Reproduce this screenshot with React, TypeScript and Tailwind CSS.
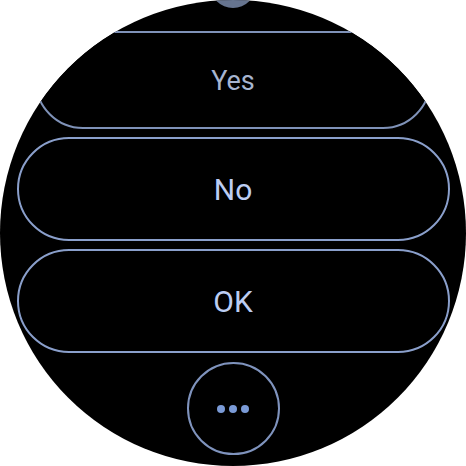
import React from "react";

const labelFont = { fontFamily: "Roboto, 'Noto Sans', sans-serif" };

const ChipButton: React.FC<{ label: string; small?: boolean }> = ({ label, small }) => {
  if (small) {
    return (
      <button className="flex w-[396px] h-[98px] shrink-0 items-center justify-center rounded-[48px] border-2 border-[#7f92b8] bg-black">
        <span className="mt-[2px] text-[27px] leading-none text-[#a7b5d0]" style={labelFont}>
          {label}
        </span>
      </button>
    );
  }
  return (
    <button className="flex w-[433px] h-[104px] shrink-0 items-center justify-center rounded-[52px] border-2 border-[#8a9fcb] bg-black">
      <span className="mt-[2px] text-[30px] leading-none text-[#bccdf3]" style={labelFont}>
        {label}
      </span>
    </button>
  );
};

export default function App() {
  return (
    <div className="w-[466px] h-[466px] bg-white">
      <div className="relative w-[466px] h-[466px] overflow-hidden rounded-full bg-black">
        <div className="flex flex-col items-center pt-[31px] gap-[8px]">
          <ChipButton label="Yes" small />
          <ChipButton label="No" />
          <ChipButton label="OK" />
          <button className="mt-[1px] flex w-[93px] h-[93px] shrink-0 items-center justify-center gap-[4px] rounded-full border-2 border-[#7f93bd] bg-black">
            <span className="w-[8px] h-[8px] rounded-full bg-[#7a9ad6]" />
            <span className="w-[8px] h-[8px] rounded-full bg-[#7a9ad6]" />
            <span className="w-[8px] h-[8px] rounded-full bg-[#7a9ad6]" />
          </button>
        </div>
        {/* scroll position indicator */}
        <div className="absolute left-[210px] top-[-38px] w-[46px] h-[46px] rounded-full bg-[#66748f]" />
      </div>
    </div>
  );
}
